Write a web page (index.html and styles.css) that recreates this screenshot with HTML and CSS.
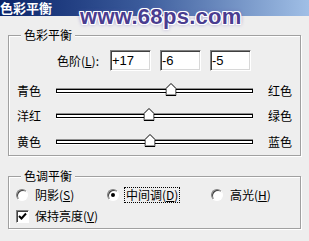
FILE: index.html
```html
<!DOCTYPE html>
<html lang="zh-CN">
<head>
  <meta charset="UTF-8">
  <title>色彩平衡</title>
  <link rel="stylesheet" href="styles.css">
</head>
<body>
  <div class="dialog">
    <div class="titlebar"><span class="title">色彩平衡</span></div>
    <div class="watermark">www.68ps.com</div>

    <fieldset class="group balance">
      <legend>色彩平衡</legend>
      <div class="levels">
        <label class="levels-label">色阶(<u>L</u>):</label>
        <input class="field" type="text" value="+17" readonly>
        <input class="field" type="text" value="-6" readonly>
        <input class="field" type="text" value="-5" readonly>
      </div>
      <div class="slider-row">
        <span class="side">青色</span>
        <div class="track">
          <svg class="thumb" style="left: 58.5%" width="11" height="13" viewBox="0 0 11 13"><polygon points="0.5,5.5 5.5,0.5 10.5,5.5 10.5,12.5 0.5,12.5" fill="#fff" stroke="#000"/><path d="M1.5 11.5 H9.5" stroke="#a0a0a0"/></svg>
        </div>
        <span class="side">红色</span>
      </div>
      <div class="slider-row row-2">
        <span class="side">洋红</span>
        <div class="track">
          <svg class="thumb" style="left: 47%" width="11" height="13" viewBox="0 0 11 13"><polygon points="0.5,5.5 5.5,0.5 10.5,5.5 10.5,12.5 0.5,12.5" fill="#fff" stroke="#000"/><path d="M1.5 11.5 H9.5" stroke="#a0a0a0"/></svg>
        </div>
        <span class="side">绿色</span>
      </div>
      <div class="slider-row">
        <span class="side">黄色</span>
        <div class="track">
          <svg class="thumb" style="left: 47.5%" width="11" height="13" viewBox="0 0 11 13"><polygon points="0.5,5.5 5.5,0.5 10.5,5.5 10.5,12.5 0.5,12.5" fill="#fff" stroke="#000"/><path d="M1.5 11.5 H9.5" stroke="#a0a0a0"/></svg>
        </div>
        <span class="side">蓝色</span>
      </div>
    </fieldset>

    <fieldset class="group tone">
      <legend>色调平衡</legend>
      <div class="options">
        <div class="option opt-shadow"><span class="radio"></span><span class="text">阴影(<u>S</u>)</span></div>
        <div class="option opt-mid"><span class="radio checked"></span><span class="text focus">中间调(<u>D</u>)</span></div>
        <div class="option"><span class="radio"></span><span class="text">高光(<u>H</u>)</span></div>
      </div>
      <div class="options keep">
        <div class="option">
          <span class="checkbox"><svg width="9" height="9" viewBox="0 0 9 9"><path d="M1 4 L3.5 6.5 L8 1.5" fill="none" stroke="#000" stroke-width="2"/></svg></span>
          <span class="text">保持亮度(<u>V</u>)</span>
        </div>
      </div>
    </fieldset>
  </div>
</body>
</html>
```

FILE: styles.css
```css
* {
  box-sizing: border-box;
  margin: 0;
  padding: 0;
}
body {
  width: 309px;
  height: 241px;
  overflow: hidden;
  background-color: #eeeeee;
  font-family: "Noto Sans CJK SC", "Liberation Sans", sans-serif;
  font-size: 12px;
  color: #000;
}
.dialog {
  position: relative;
  height: 241px;
}
.titlebar {
  height: 16px;
  background: linear-gradient(to right, #0a246a, #3a5a9a 45%, #a0bfe6);
}
.title {
  display: block;
  color: #fff;
  font-size: 13px;
  font-weight: bold;
  line-height: 16px;
}
.watermark {
  position: absolute;
  left: 80px;
  top: 4px;
  font-family: "Liberation Sans", Arial, sans-serif;
  font-size: 22px;
  font-weight: bold;
  color: #4a3d90;
  letter-spacing: 0.3px;
  text-shadow:
    1px 0 0 #fff, -1px 0 0 #fff, 0 1px 0 #fff, 0 -1px 0 #fff,
    1px 1px 0 #fff, -1px -1px 0 #fff, 1px -1px 0 #fff, -1px 1px 0 #fff,
    0 0 4px #6a5fb0;
}

/* group boxes */
.group {
  width: 293px;
  margin-left: 8px;
  padding: 0;
  border: 1px solid #a0a0a0;
  box-shadow: inset 1px 1px #fff, 1px 1px #fff;
}
.group legend {
  margin-left: 12px;
  padding: 0 3px;
  line-height: 14px;
  background-color: #eeeeee;
}
.balance {
  margin-top: 12px;
  padding-bottom: 1px;
}
.tone {
  margin-top: 13px;
  padding-bottom: 3px;
}

/* levels */
.levels {
  display: flex;
  align-items: center;
  padding-left: 48px;
  margin-top: 8px;
  margin-bottom: 7px;
}
.levels-label {
  width: 53px;
}
.field {
  width: 41px;
  height: 21px;
  margin-right: 9px;
  padding-left: 1px;
  font-family: "Liberation Sans", Arial, sans-serif;
  font-size: 13px;
  background-color: #fff;
  border: 1px solid;
  border-color: #808080 #fff #fff #808080;
  box-shadow: inset 1px 1px #404040, inset -1px -1px #d8d8d8;
  outline: none;
}

/* sliders */
.slider-row {
  display: flex;
  align-items: center;
  height: 25px;
  padding: 0 8px;
}
.slider-row.row-2 {
  height: 26px;
}
.side {
  width: 24px;
  line-height: 14px;
}
.track {
  position: relative;
  flex: 1;
  height: 4px;
  margin: 0 15px;
  background-color: #fff;
  border: 1px solid #000;
  box-shadow: 0 -1px #909090, 0 1px #fff;
}
.thumb {
  position: absolute;
  top: -7px;
  transform: translateX(-50%);
}

/* radios / checkbox */
.options {
  display: flex;
  align-items: center;
  height: 18px;
  margin-top: 3px;
  padding-left: 7px;
}
.options.keep {
  margin-top: 3px;
}
.option {
  display: flex;
  align-items: center;
}
.opt-shadow {
  width: 91px;
}
.opt-mid {
  width: 104px;
}
.radio {
  position: relative;
  width: 12px;
  height: 12px;
  margin-right: 5px;
  border-radius: 50%;
  background-color: #fff;
  border: 1px solid;
  border-color: #808080 #fff #fff #808080;
  box-shadow: inset 1px 1px #404040;
}
.radio.checked::after {
  content: "";
  position: absolute;
  left: 3px;
  top: 3px;
  width: 4px;
  height: 4px;
  border-radius: 50%;
  background-color: #000;
}
.text {
  padding: 0 1px;
  line-height: 14px;
  border: 1px dotted transparent;
}
.text.focus {
  border-color: #000;
}
.checkbox {
  display: flex;
  align-items: center;
  justify-content: center;
  width: 13px;
  height: 13px;
  margin-right: 4px;
  background-color: #fff;
  border: 1px solid;
  border-color: #808080 #fff #fff #808080;
  box-shadow: inset 1px 1px #404040;
}
```
